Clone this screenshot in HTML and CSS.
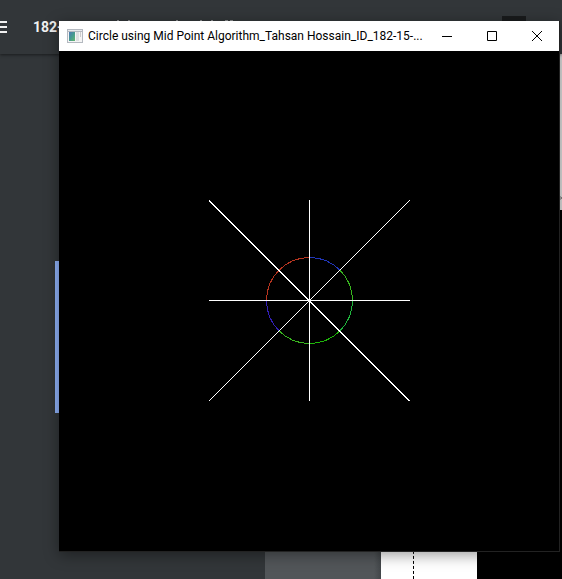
FILE: index.html
```html
<!DOCTYPE html>
<html lang="en">
<head>
<meta charset="utf-8">
<title>Circle using Mid Point Algorithm</title>
<link rel="stylesheet" href="styles.css">
</head>
<body>
<div class="viewer">
  <header class="toolbar">
    <button class="menu" aria-label="Menu"><svg width="8" height="14" viewBox="0 0 8 14" shape-rendering="crispEdges"><path d="M0 1h7v2H0zM0 6h7v2H0zM0 11h7v2H0z" fill="#f1f1f1"/></svg></button>
    <span class="doc-name">182-</span>
    <svg class="ascenders" width="122" height="12" viewBox="0 0 122 12" shape-rendering="crispEdges"><path d="M1 0h2v1H1zM12 0h2v1h-2zM60 0h2v1h-2zM84 0h2v1h-2zM95 0h2v1h-2zM109 0h3v1h-3zM114 0h3v1h-3z" fill="#8b8e90"/></svg>
    <span class="page-field"></span>
  </header>
  <div class="workspace">
    <div class="sidebar"><div class="selection"></div></div>
    <div class="document"></div>
    <div class="sheet"><div class="rule"></div></div>
    <div class="terminal"><div class="scroll-edge"><svg width="4" height="6" viewBox="0 0 4 6"><path d="M0 1l3 2-3 2" fill="none" stroke="#777"/></svg></div></div>
  </div>
</div>
<main class="window">
  <div class="titlebar">
    <svg class="app-icon" width="16" height="14" viewBox="0 0 16 14">
      <defs><linearGradient id="pane" x1="0" y1="0" x2="1" y2="1"><stop offset="0" stop-color="#5277b4"/><stop offset=".5" stop-color="#469b91"/><stop offset="1" stop-color="#65b66c"/></linearGradient></defs>
      <path d="M0 0h16v14H0z" fill="#b4b9c0"/><path d="M1 1h14v1H1z" fill="#e8eaed"/>
      <path d="M1 3h14v10H1z" fill="#f5f5f5"/><path d="M2 3h6v9H2z" fill="url(#pane)"/>
      <path d="M9 3h3v9H9z" fill="#dedfe1"/><path d="M13 3h1v5h-1z" fill="#ccc"/>
    </svg>
    <h1 class="title">Circle using Mid Point Algorithm_Tahsan Hossain_ID_182-15-...</h1>
    <button class="control" aria-label="Minimize"><svg width="10" height="10" viewBox="0 0 10 10"><path d="M0 5h10v1H0z"/></svg></button>
    <button class="control" aria-label="Maximize"><svg width="10" height="10" viewBox="0 0 10 10"><path d="M.5.5h9v9h-9z" fill="none" stroke="#000"/></svg></button>
    <button class="control" aria-label="Close"><svg width="10" height="10" viewBox="0 0 10 10"><path d="M0 0l10 10M10 0L0 10" fill="none" stroke="#000"/></svg></button>
  </div>
  <svg class="plot" viewBox="0 0 500 500" shape-rendering="crispEdges" role="img" aria-label="Circle in eight octants with axes and diagonals">
    <g fill="none" stroke-width="1">
      <path d="M250.5 206.5A43 43 0 0 0 207.5 249.5" stroke="#b5341f"/>
      <path d="M250.5 206.5A43 43 0 0 1 280.9 219.1" stroke="#2136b8"/>
      <path d="M280.9 219.1A43 43 0 0 1 293.5 249.5" stroke="#38b51f"/>
      <path d="M293.5 249.5A43 43 0 0 1 280.9 279.9" stroke="#1fb53c"/>
      <path d="M280.9 279.9A43 43 0 0 1 250.5 292.5" stroke="#1fb50a"/>
      <path d="M250.5 292.5A43 43 0 0 1 220.1 279.9" stroke="#38b51f"/>
      <path d="M220.1 279.9A43 43 0 0 1 207.5 249.5" stroke="#321fb5"/>
    </g>
    <g fill="none" stroke="#fff">
      <path d="M250.5 149V350M150 249.5H351"/>
      <path d="M150 350L351 149"/>
      <path d="M150 149L351 350M150 150L350 350"/>
    </g>
  </svg>
</main>
</body>
</html>
```

FILE: styles.css
```css
* { box-sizing: border-box; }
html, body { height: 100%; }
body {
  margin: 0;
  overflow: hidden;
  background: #323639;
  font-family: Roboto, "Open Sans", sans-serif;
}
button { border: 0; padding: 0; background: none; }
.viewer { height: 100%; display: flex; flex-direction: column; }
.toolbar {
  position: relative;
  height: 54px;
  flex: none;
  display: flex;
  align-items: center;
  background: #323639;
  box-shadow: 0 1px 3px rgba(0, 0, 0, .5);
}
.menu { display: flex; width: 33px; }
.doc-name {
  width: 83px;
  color: #f1f1f1;
  font: bold 14px/16px Roboto, sans-serif;
}
.ascenders { margin-bottom: 2px; }
.page-field {
  width: 24px;
  height: 22px;
  margin-left: auto;
  margin-right: 36px;
  background: #191b1c;
}
.workspace { flex: 1; display: flex; background: #323639; }
.sidebar { flex: none; width: 265px; padding-top: 207px; }
.selection { width: 4px; height: 152px; margin-left: 55px; background: #8fb2fa; }
.document { flex: none; width: 116px; background: linear-gradient(90deg, #525659 94%, #424649); }
.sheet { flex: none; width: 96px; padding-left: 32px; background: #fff; }
.rule { height: 100%; border-left: 1px dashed #000; }
.terminal { flex: 1; min-width: 0; background: #000; }
.scroll-edge {
  height: 156px;
  margin-left: 82px;
  padding-top: 141px;
  background: #e4e4e4;
}
.scroll-edge svg { display: block; }
.window {
  position: absolute;
  inset: 21px 2px 27px 59px;
  display: flex;
  flex-direction: column;
  background: #000;
  border-right: 1px solid #222;
  border-bottom: 1px solid #222;
  box-shadow: 0 3px 14px rgba(0, 0, 0, .4);
}
.titlebar {
  height: 30px;
  flex: none;
  display: flex;
  align-items: center;
  background: #fff;
}
.app-icon { flex: none; margin: 0 5px 0 8px; }
.title {
  flex: 1;
  margin: 0;
  white-space: nowrap;
  color: #000;
  font-size: 12px;
  font-weight: 400;
  line-height: 16px;
}
.control {
  width: 45px;
  height: 30px;
  flex: none;
  display: flex;
  align-items: center;
  justify-content: center;
}
.plot { display: block; flex: 1; min-height: 0; width: 100%; }
```
